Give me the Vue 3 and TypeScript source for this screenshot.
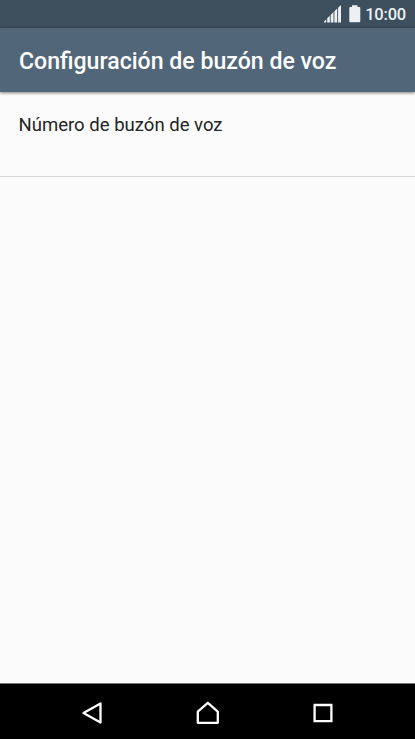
<script setup lang="ts">
interface Preference {
  id: string
  title: string
}

const time = '10:00'
const heading = 'Configuración de buzón de voz'
const preferences: Preference[] = [{ id: 'number', title: 'Número de buzón de voz' }]
</script>

<template>
  <div class="screen">
    <div class="status">
      <svg class="signal" width="18" height="18" viewBox="0 0 18 18" aria-hidden="true">
        <path d="M0 17.5V16.5L2.2 14.4V17.5ZM3.2 17.5V13.3L5.8 10.8V17.5ZM6.7 17.5V9.9L9.5 7V17.5ZM10.4 17.5V6.3L13.2 3.6V17.5ZM14.1 17.5V2.8L17 0V17.5Z" />
      </svg>
      <svg class="battery" width="12" height="18" viewBox="0 0 12 18" aria-hidden="true">
        <path d="M3 0.3H8.5V2H10.2Q11.3 2 11.3 3.1V16.2Q11.3 17.2 10.2 17.2H1.3Q0.3 17.2 0.3 16.2V3.1Q0.3 2 1.3 2H3Z" />
      </svg>
      <span class="time">{{ time }}</span>
    </div>
    <header class="app-bar">
      <h1>{{ heading }}</h1>
    </header>
    <main class="content">
      <div v-for="item in preferences" :key="item.id" class="row">{{ item.title }}</div>
    </main>
    <nav class="nav">
      <button aria-label="Atrás">
        <svg width="28" height="28" viewBox="0 0 28 28"><path d="M22.5 4.4V23.6L5.5 14Z" /></svg>
      </button>
      <button aria-label="Inicio">
        <svg width="28" height="28" viewBox="0 0 28 28"><path d="M3.8 12.6L13.8 3.8L23.8 12.6V23.8H3.8Z" /></svg>
      </button>
      <button aria-label="Recientes">
        <svg width="28" height="28" viewBox="0 0 28 28"><path class="square" d="M4.6 6H21.4V22.2H4.6Z" /></svg>
      </button>
    </nav>
  </div>
</template>

<style>
body {
  margin: 0;
}
</style>

<style scoped>
.screen {
  display: flex;
  flex-direction: column;
  height: 739px;
  overflow: hidden;
  background: #fbfbfb;
  font-family: Roboto, "Liberation Sans", sans-serif;
}

.status {
  display: flex;
  flex: none;
  justify-content: flex-end;
  height: 28px;
  padding-right: 9px;
  box-sizing: border-box;
  background: #3d4e5c;
  color: #ecf0f2;
}

.status svg {
  flex: none;
  margin-top: 5px;
  fill: #ecf0f2;
}

.battery {
  margin-left: 7px;
}

.time {
  margin-left: 4px;
  font-size: 16.5px;
  font-weight: 500;
  letter-spacing: -0.2px;
  line-height: 30px;
}

.app-bar {
  z-index: 1;
  display: flex;
  flex: none;
  align-items: center;
  height: 64px;
  padding: 4px 19px 0;
  box-sizing: border-box;
  background: #516679;
  box-shadow: 0 1px 3px rgba(0, 0, 0, 0.5);
}

h1 {
  margin: 0;
  color: #fff;
  font-size: 23.1px;
  font-weight: 500;
  line-height: 30px;
  white-space: nowrap;
}

.content {
  flex: 1;
}

.row {
  height: 85px;
  padding: 21px 18.5px 0;
  box-sizing: border-box;
  border-bottom: 1px solid #d5d5d5;
  color: #242424;
  font-size: 18.55px;
  line-height: 24px;
}

.nav {
  display: flex;
  flex: none;
  justify-content: center;
  gap: 87px;
  height: 56px;
  border-top: 1px solid #777;
  box-sizing: border-box;
  background: #000;
}

button {
  padding: 0 0 0 1px;
  border: 0;
  background: none;
}

button svg {
  display: block;
  margin-top: 3px;
  fill: none;
  stroke: #fff;
  stroke-width: 2.3;
  stroke-linejoin: round;
}

.square {
  stroke-linejoin: miter;
}
</style>
